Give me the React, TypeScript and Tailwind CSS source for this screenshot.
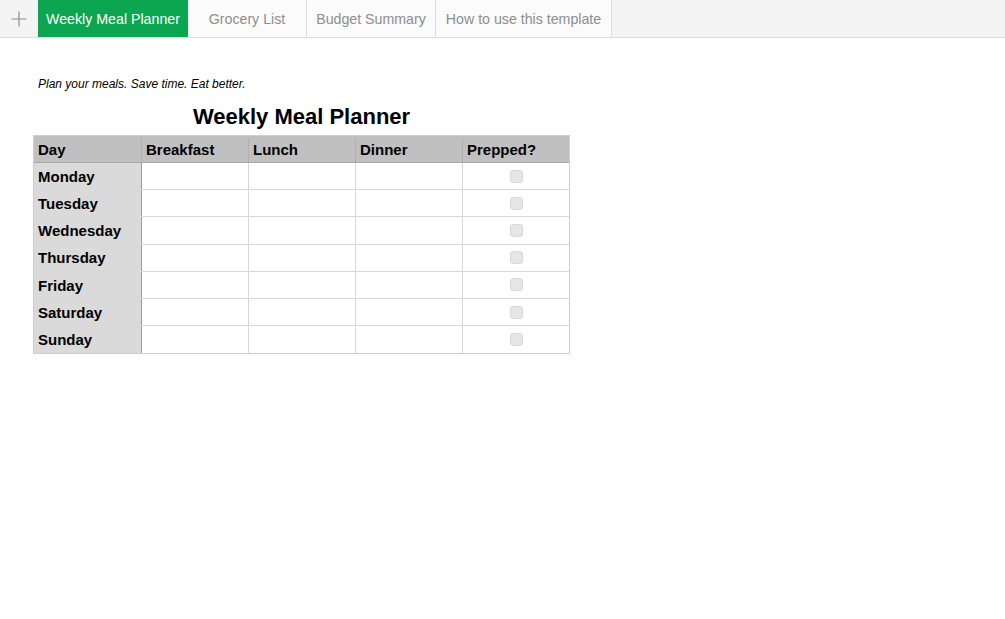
import React from 'react';

const days = ['Monday', 'Tuesday', 'Wednesday', 'Thursday', 'Friday', 'Saturday', 'Sunday'];
const tabs = [
  { name: 'Weekly Meal Planner', w: 'w-[150px]', active: true },
  { name: 'Grocery List', w: 'w-[119px]', active: false },
  { name: 'Budget Summary', w: 'w-[129px]', active: false },
  { name: 'How to use this template', w: 'w-[176px]', active: false },
];

export default function App() {
  return (
    <div className="w-[1005px] h-[619px] bg-white overflow-hidden" style={{ fontFamily: '"Liberation Sans", Arial, sans-serif' }}>
      <div className="flex h-[38px] bg-[#f4f4f4] border-b border-[#dcdcdc]">
        <div className="w-[38px] flex items-center justify-center text-[#8c8c8c]">
          <svg width="16" height="16" viewBox="0 0 16 16" fill="none" stroke="currentColor" strokeWidth="1.2">
            <path d="M8 0.5V15.5M0.5 8H15.5" />
          </svg>
        </div>
        {tabs.map(t => (
          <div
            key={t.name}
            className={`${t.w} pt-[2px] flex items-center justify-center text-[14.2px] ${t.active ? 'bg-[#0ba64f] text-white' : 'bg-[#fbfbfb] text-[#8e8e8e] border-r border-[#dcdcdc]'}`}
          >
            {t.name}
          </div>
        ))}
      </div>

      <div className="pl-[33px] pt-[39px]">
        <p className="pl-[5px] text-[12px] italic text-black leading-[15px]">Plan your meals. Save time. Eat better.</p>
        <div className="w-[537px] mt-[12px]">
          <h1 className="text-center text-[22px] font-bold leading-[26px] text-black">Weekly Meal Planner</h1>
          <div className="mt-[5px] border border-[#cfcfcf]">
            <div className="flex h-[27px] pt-[2px] bg-[#c0c0c0] border-b border-[#a8a8a8] text-[15px] font-bold text-black">
              <div className="w-[108px] pl-[4px] flex items-center border-r border-[#b0b0b0]">Day</div>
              <div className="w-[107px] pl-[4px] flex items-center border-r border-[#b0b0b0]">Breakfast</div>
              <div className="w-[107px] pl-[4px] flex items-center border-r border-[#b0b0b0]">Lunch</div>
              <div className="w-[107px] pl-[4px] flex items-center border-r border-[#b0b0b0]">Dinner</div>
              <div className="flex-1 pl-[4px] flex items-center">Prepped?</div>
            </div>
            {days.map((d, i) => (
              <div key={d} className={`flex h-[27.2px] ${i < days.length - 1 ? 'border-b border-[#d8d8d8]' : ''}`}>
                <div className="w-[108px] pl-[4px] pt-[2px] flex items-center bg-[#dadada] border-r border-[#9e9e9e] text-[15px] font-bold text-black">{d}</div>
                <div className="w-[107px] border-r border-[#d8d8d8]" />
                <div className="w-[107px] border-r border-[#d8d8d8]" />
                <div className="w-[107px] border-r border-[#d8d8d8]" />
                <div className="flex-1 flex items-center justify-center">
                  <div className="w-[13px] h-[13px] rounded-[3px] bg-[#e6e6e6] border border-[#d9d9d9]" />
                </div>
              </div>
            ))}
          </div>
        </div>
      </div>
    </div>
  );
}
